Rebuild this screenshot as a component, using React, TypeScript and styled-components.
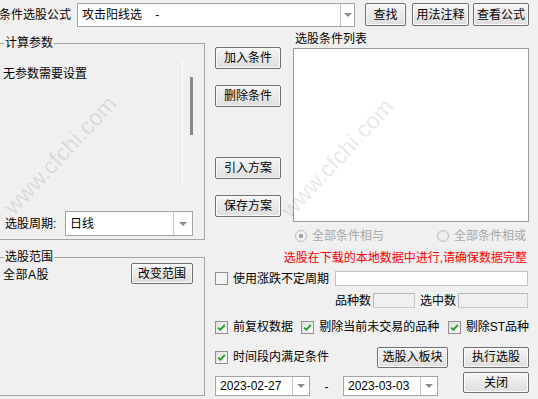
import React from 'react';
import styled, { createGlobalStyle } from 'styled-components';

const GlobalStyle = createGlobalStyle`
  html, body {
    margin: 0;
    padding: 0;
    background: #f0f0f0;
  }
`;

const Window = styled.div`
  position: relative;
  width: 538px;
  height: 399px;
  overflow: hidden;
  background: #f0f0f0;
  color: #000;
  font-family: "Liberation Sans", "Noto Sans CJK SC", sans-serif;
  font-size: 12px;
  line-height: 14px;
`;

const TopBar = styled.div`
  display: flex;
  align-items: flex-start;
  height: 30px;
  padding-top: 3px;
  box-sizing: border-box;
`;

const TopLabel = styled.span`
  width: 78px;
  margin-left: -1px;
  line-height: 24px;
`;

const Combo = styled.div<{ $w: number; $h: number }>`
  display: flex;
  width: ${(p) => p.$w}px;
  height: ${(p) => p.$h}px;
  box-sizing: border-box;
  border: 1px solid #a3a3a3;
  background: #fff;
`;

const ComboText = styled.span`
  flex: 1;
  display: flex;
  align-items: center;
  padding-left: 4px;
  white-space: pre;
  overflow: hidden;
`;

const ComboArrow = styled.span<{ $w: number }>`
  width: ${(p) => p.$w}px;
  border-left: 1px solid #c4c4c4;
  display: flex;
  align-items: center;
  justify-content: center;
  &::after {
    content: '';
    border-left: 4px solid transparent;
    border-right: 4px solid transparent;
    border-top: 4px solid #8a8a8a;
  }
`;

const Button = styled.button<{ $w: number; $h?: number; $ml?: number }>`
  width: ${(p) => p.$w}px;
  height: ${(p) => p.$h ?? 22}px;
  margin-left: ${(p) => p.$ml ?? 0}px;
  box-sizing: border-box;
  padding: 0;
  border: 1px solid #707070;
  border-radius: 2px;
  background: linear-gradient(#f6f6f6, #e9e9e9 50%, #dedede);
  box-shadow: inset 0 0 0 1px #fbfbfb;
  color: #000;
  font: inherit;
  display: flex;
  align-items: center;
  justify-content: center;
  flex-shrink: 0;
`;

const Body = styled.div`
  display: flex;
  align-items: flex-start;
`;

const LeftCol = styled.div`
  width: 207px;
  margin-left: -2px;
  display: flex;
  flex-direction: column;
`;

const Group = styled.fieldset<{ $h: number; $mt: number }>`
  margin: ${(p) => p.$mt}px 0 0 0;
  padding: 0;
  height: ${(p) => p.$h}px;
  box-sizing: border-box;
  border: 1px solid #a5a5a5;
  min-width: 0;
`;

const Legend = styled.legend`
  margin-left: 5px;
  padding: 0 1px;
  line-height: 14px;
`;

const ParamArea = styled.div`
  display: flex;
  height: 127px;
  margin-top: 9px;
`;

const ParamText = styled.div`
  flex: 1;
  padding: 8px 0 0 4px;
`;

const ScrollRail = styled.div`
  width: 20px;
  margin-right: 1px;
  border-left: 1px solid #fff;
`;

const ScrollThumb = styled.div`
  width: 3px;
  height: 58px;
  margin: 18px 0 0 7px;
  background: #8a8a8a;
`;

const PeriodRow = styled.div`
  display: flex;
  align-items: center;
  margin-top: 25px;
  padding-left: 6px;
`;

const PeriodLabel = styled.span`
  width: 60px;
`;

const RangeRow = styled.div`
  display: flex;
  align-items: center;
  justify-content: space-between;
  margin-top: -1px;
  padding: 0 11px 0 4px;
`;

const RangeText = styled.span`
  margin-top: 2px;
  letter-spacing: 0.5px;
`;

const RightCol = styled.div`
  width: 314px;
  margin-left: 10px;
  display: flex;
  flex-direction: column;
`;

const UpperArea = styled.div`
  display: flex;
`;

const ButtonCol = styled.div`
  width: 66px;
  display: flex;
  flex-direction: column;
  padding-top: 17px;
`;

const ListCol = styled.div`
  width: 236px;
  margin-left: 12px;
  display: flex;
  flex-direction: column;
`;

const ListLabel = styled.span`
  margin-top: 2px;
  padding-left: 2px;
`;

const ListBox = styled.div`
  height: 174px;
  margin-top: 2px;
  box-sizing: border-box;
  border: 1px solid #9a9a9a;
  background: #fff;
`;

const RadioRow = styled.div`
  display: flex;
  margin-top: 7px;
  padding-left: 2px;
  height: 14px;
`;

const RadioItem = styled.label<{ $w?: number }>`
  display: flex;
  align-items: center;
  gap: 5px;
  width: ${(p) => (p.$w ? `${p.$w}px` : 'auto')};
  color: #a8a8a8;
`;

const RadioDot = styled.span<{ $on?: boolean }>`
  width: 12px;
  height: 12px;
  box-sizing: border-box;
  border-radius: 50%;
  border: 1px solid #b8b8b8;
  background: radial-gradient(circle, ${(p) => (p.$on ? '#a0a0a0 0 2px, #f4f4f4 2.5px' : '#f4f4f4 0, #e8e8e8 100%')});
`;

const Notice = styled.div`
  margin-top: 8px;
  padding-right: 2px;
  text-align: right;
  color: #ff0000;
`;

const Row = styled.div<{ $mt: number; $h: number; $justify?: string; $align?: string }>`
  display: flex;
  align-items: ${(p) => p.$align ?? 'center'};
  justify-content: ${(p) => p.$justify ?? 'flex-start'};
  margin-top: ${(p) => p.$mt}px;
  height: ${(p) => p.$h}px;
`;

const CheckItem = styled.label`
  display: flex;
  align-items: center;
  gap: 5px;
  white-space: nowrap;
`;

const CheckBox = styled.span<{ $on?: boolean }>`
  width: 13px;
  height: 13px;
  box-sizing: border-box;
  border: 1px solid #8e8f8f;
  background: ${(p) => (p.$on ? 'linear-gradient(135deg, #dedede, #fafafa)' : '#f4f4f4')};
  display: flex;
  align-items: center;
  justify-content: center;
`;

const WideInput = styled.div`
  width: 193px;
  height: 15px;
  margin-left: auto;
  margin-right: 1px;
  box-sizing: border-box;
  border: 1px solid #c2c2c2;
  background: #fff;
`;

const StatLabel = styled.span<{ $ml?: number }>`
  margin-left: ${(p) => p.$ml ?? 0}px;
  margin-right: 2px;
`;

const StatBox = styled.div<{ $w: number }>`
  width: ${(p) => p.$w}px;
  height: 15px;
  box-sizing: border-box;
  border: 1px solid #c8c8c8;
  border-top-color: #b4b4b4;
  border-left-color: #b4b4b4;
`;

const Dash = styled.span`
  width: 33px;
  text-align: center;
  margin-top: 8px;
`;

const Watermark = styled.span<{ $x: number; $y: number }>`
  position: absolute;
  left: ${(p) => p.$x - 90}px;
  top: ${(p) => p.$y - 13}px;
  width: 180px;
  line-height: 26px;
  text-align: center;
  font-family: "Liberation Sans", sans-serif;
  font-size: 23px;
  color: rgba(0, 0, 0, 0.11);
  transform: rotate(-47deg);
  pointer-events: none;
`;

function Check() {
  return (
    <svg width="9" height="9" viewBox="0 0 9 9">
      <polyline points="1.2,4.6 3.4,6.8 7.8,1.8" fill="none" stroke="#1e9b1e" strokeWidth="1.8" />
    </svg>
  );
}

export default function App() {
  return (
    <>
      <GlobalStyle />
      <Window>
        <TopBar>
          <TopLabel>条件选股公式</TopLabel>
          <Combo $w={278} $h={24}>
            <ComboText>{'攻击阳线选    -'}</ComboText>
            <ComboArrow $w={13} />
          </Combo>
          <Button $w={41} $h={23} $ml={10}>查找</Button>
          <Button $w={57} $h={23} $ml={6}>用法注释</Button>
          <Button $w={56} $h={23} $ml={4}>查看公式</Button>
        </TopBar>

        <Body>
          <LeftCol>
            <Group $h={204} $mt={6}>
              <Legend>计算参数</Legend>
              <ParamArea>
                <ParamText>无参数需要设置</ParamText>
                <ScrollRail>
                  <ScrollThumb />
                </ScrollRail>
              </ParamArea>
              <PeriodRow>
                <PeriodLabel>选股周期:</PeriodLabel>
                <Combo $w={128} $h={25}>
                  <ComboText>日线</ComboText>
                  <ComboArrow $w={18} />
                </Combo>
              </PeriodRow>
            </Group>

            <Group $h={146} $mt={10}>
              <Legend>选股范围</Legend>
              <RangeRow>
                <RangeText>全部A股</RangeText>
                <Button $w={62} $h={21}>改变范围</Button>
              </RangeRow>
            </Group>
          </LeftCol>

          <RightCol>
            <UpperArea>
              <ButtonCol>
                <Button $w={66}>加入条件</Button>
                <Button $w={66} style={{ marginTop: 16 }}>删除条件</Button>
                <Button $w={66} style={{ marginTop: 50 }}>引入方案</Button>
                <Button $w={66} style={{ marginTop: 16 }}>保存方案</Button>
              </ButtonCol>
              <ListCol>
                <ListLabel>选股条件列表</ListLabel>
                <ListBox />
                <RadioRow>
                  <RadioItem $w={142}>
                    <RadioDot $on />
                    全部条件相与
                  </RadioItem>
                  <RadioItem>
                    <RadioDot />
                    全部条件相或
                  </RadioItem>
                </RadioRow>
              </ListCol>
            </UpperArea>

            <Notice>选股在下载的本地数据中进行,请确保数据完整</Notice>

            <Row $mt={6} $h={15}>
              <CheckItem>
                <CheckBox />
                使用涨跌不定周期
              </CheckItem>
              <WideInput />
            </Row>

            <Row $mt={7} $h={15} $justify="flex-end">
              <StatLabel>品种数</StatLabel>
              <StatBox $w={42} />
              <StatLabel $ml={5}>选中数</StatLabel>
              <StatBox $w={70} />
              <span style={{ width: 1 }} />
            </Row>

            <Row $mt={12} $h={14} $justify="space-between">
              <CheckItem>
                <CheckBox $on><Check /></CheckBox>
                前复权数据
              </CheckItem>
              <CheckItem>
                <CheckBox $on><Check /></CheckBox>
                剔除当前未交易的品种
              </CheckItem>
              <CheckItem>
                <CheckBox $on><Check /></CheckBox>
                剔除ST品种
              </CheckItem>
            </Row>

            <Row $mt={13} $h={20}>
              <CheckItem>
                <CheckBox $on><Check /></CheckBox>
                时间段内满足条件
              </CheckItem>
              <Button $w={71} $h={21} style={{ marginLeft: 'auto' }}>选股入板块</Button>
              <Button $w={66} $h={21} $ml={15}>执行选股</Button>
            </Row>

            <Row $mt={5} $h={23} $align="flex-start">
              <Combo $w={95} $h={20} style={{ marginTop: 4 }}>
                <ComboText>2023-02-27</ComboText>
                <ComboArrow $w={16} />
              </Combo>
              <Dash>-</Dash>
              <Combo $w={95} $h={20} style={{ marginTop: 4 }}>
                <ComboText>2023-03-03</ComboText>
                <ComboArrow $w={16} />
              </Combo>
              <Button $w={66} $h={21} style={{ marginLeft: 'auto' }}>关闭</Button>
            </Row>
          </RightCol>
        </Body>

        <Watermark $x={60} $y={155}>www.cfchi.com</Watermark>
        <Watermark $x={337} $y={158}>www.cfchi.com</Watermark>
      </Window>
    </>
  );
}
